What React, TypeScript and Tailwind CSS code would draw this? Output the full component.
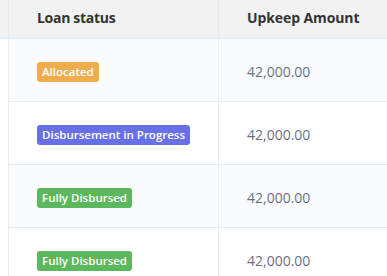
import React from "react";

const rows = [
  { status: "Allocated", color: "bg-[#f0ad4e]", amount: "42,000.00" },
  { status: "Disbursement in Progress", color: "bg-[#6770e6]", amount: "42,000.00" },
  { status: "Fully Disbursed", color: "bg-[#5cb85c]", amount: "42,000.00" },
  { status: "Fully Disbursed", color: "bg-[#5cb85c]", amount: "42,000.00" },
];

export default function App() {
  return (
    <div
      className="w-[387px] h-[276px] overflow-hidden bg-white"
      style={{ fontFamily: '"Open Sans", "Liberation Sans", sans-serif' }}
    >
      <div className="grid grid-cols-[9px_210px_1fr] h-[39px] bg-[#f2f2f2] border-b-2 border-[#e3ebf3]">
        <div className="border-r border-[#e3ebf3]" />
        <div className="border-r border-[#e3ebf3] pl-[28px] pb-[3px] flex items-center text-[14px] font-bold text-[#333] tracking-[-0.3px]">
          Loan status
        </div>
        <div className="pl-[28px] pb-[3px] flex items-center text-[14px] font-bold text-[#333] tracking-[-0.1px]">
          Upkeep Amount
        </div>
      </div>
      {rows.map((r, i) => (
        <div key={i} className="grid grid-cols-[9px_210px_1fr] h-[63px]">
          <div className="border-r border-[#e3ebf3] bg-white" />
          <div
            className={`border-r border-b border-[#e3ebf3] pl-[28px] flex items-center pt-[3px] ${
              i % 2 === 0 ? "bg-[#f9fbfd]" : "bg-white"
            }`}
          >
            <span
              className={`${r.color} text-white text-[11.5px] font-semibold leading-[20px] h-[20px] px-[5px] rounded-[3px]`}
            >
              {r.status}
            </span>
          </div>
          <div
            className={`border-b border-[#e3ebf3] pl-[28px] flex items-center pt-[3px] text-[14px] text-[#6b6f82] ${
              i % 2 === 0 ? "bg-[#f9fbfd]" : "bg-white"
            }`}
          >
            {r.amount}
          </div>
        </div>
      ))}
    </div>
  );
}
